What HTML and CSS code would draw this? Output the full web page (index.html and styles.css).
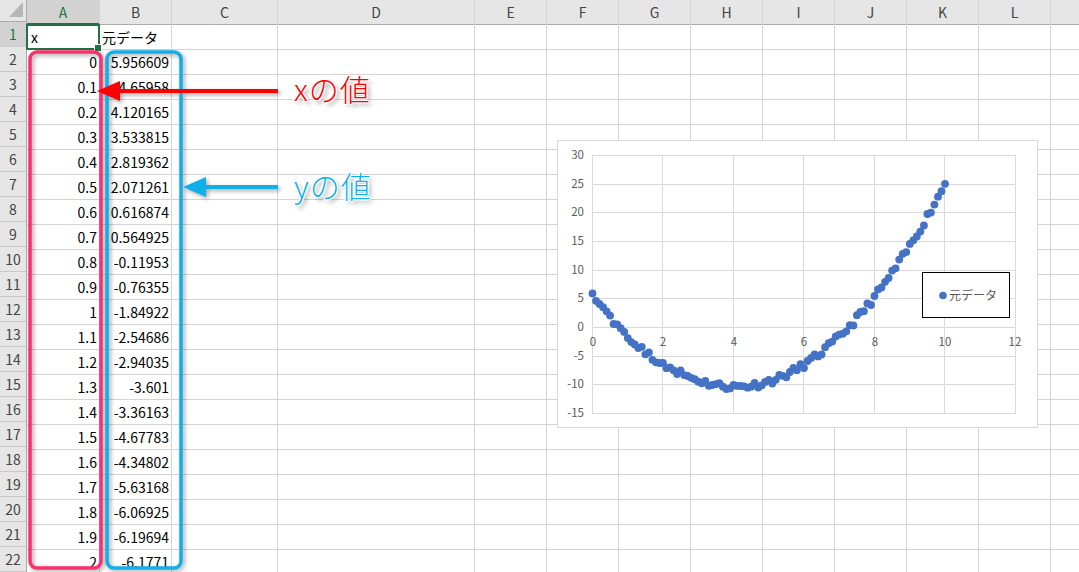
FILE: index.html
```html
<!DOCTYPE html>
<html lang="ja">

<head>
    <meta charset="UTF-8" />
    <title>元データ - Excel</title>
    <link rel="stylesheet" href="styles.css">
</head>

<body>
    <div class="sheet">
        <div class="col rowhead">
            <div class="hd corner">
                <svg width="14" height="15" viewBox="0 0 14 15"><polygon points="14,0 14,15 0,15" fill="#b7b7b7" /></svg>
            </div>
            <div class="cells">
                <div class="cell sel">1</div>
                <div class="cell">2</div>
                <div class="cell">3</div>
                <div class="cell">4</div>
                <div class="cell">5</div>
                <div class="cell">6</div>
                <div class="cell">7</div>
                <div class="cell">8</div>
                <div class="cell">9</div>
                <div class="cell">10</div>
                <div class="cell">11</div>
                <div class="cell">12</div>
                <div class="cell">13</div>
                <div class="cell">14</div>
                <div class="cell">15</div>
                <div class="cell">16</div>
                <div class="cell">17</div>
                <div class="cell">18</div>
                <div class="cell">19</div>
                <div class="cell">20</div>
                <div class="cell">21</div>
                <div class="cell">22</div>
            </div>
        </div>

        <div class="col col-a">
            <div class="hd sel">A</div>
            <div class="cells">
                <div class="cell text active">x</div>
                <div class="cell">0</div>
                <div class="cell">0.1</div>
                <div class="cell">0.2</div>
                <div class="cell">0.3</div>
                <div class="cell">0.4</div>
                <div class="cell">0.5</div>
                <div class="cell">0.6</div>
                <div class="cell">0.7</div>
                <div class="cell">0.8</div>
                <div class="cell">0.9</div>
                <div class="cell">1</div>
                <div class="cell">1.1</div>
                <div class="cell">1.2</div>
                <div class="cell">1.3</div>
                <div class="cell">1.4</div>
                <div class="cell">1.5</div>
                <div class="cell">1.6</div>
                <div class="cell">1.7</div>
                <div class="cell">1.8</div>
                <div class="cell">1.9</div>
                <div class="cell">2</div>
            </div>
        </div>

        <div class="col col-b">
            <div class="hd">B</div>
            <div class="cells">
                <div class="cell text">元データ</div>
                <div class="cell">5.956609</div>
                <div class="cell">4.65958</div>
                <div class="cell">4.120165</div>
                <div class="cell">3.533815</div>
                <div class="cell">2.819362</div>
                <div class="cell">2.071261</div>
                <div class="cell">0.616874</div>
                <div class="cell">0.564925</div>
                <div class="cell">-0.11953</div>
                <div class="cell">-0.76355</div>
                <div class="cell">-1.84922</div>
                <div class="cell">-2.54686</div>
                <div class="cell">-2.94035</div>
                <div class="cell">-3.601</div>
                <div class="cell">-3.36163</div>
                <div class="cell">-4.67783</div>
                <div class="cell">-4.34802</div>
                <div class="cell">-5.63168</div>
                <div class="cell">-6.06925</div>
                <div class="cell">-6.19694</div>
                <div class="cell">-6.1771</div>
            </div>
        </div>

        <div class="col col-c"><div class="hd">C</div><div class="cells"></div></div>
        <div class="col col-d"><div class="hd">D</div><div class="cells"></div></div>
        <div class="col"><div class="hd">E</div><div class="cells"></div></div>
        <div class="col"><div class="hd">F</div><div class="cells"></div></div>
        <div class="col"><div class="hd">G</div><div class="cells"></div></div>
        <div class="col"><div class="hd">H</div><div class="cells"></div></div>
        <div class="col"><div class="hd">I</div><div class="cells"></div></div>
        <div class="col"><div class="hd">J</div><div class="cells"></div></div>
        <div class="col"><div class="hd">K</div><div class="cells"></div></div>
        <div class="col"><div class="hd">L</div><div class="cells"></div></div>
        <div class="col col-m"><div class="hd"></div><div class="cells"></div></div>

        <!-- annotation frames and arrows drawn over the cells -->
        <svg class="marks" width="1079" height="572" viewBox="0 0 1079 572">
            <g class="shadowed">
                <rect x="30" y="52" width="71" height="516" rx="7" fill="none" stroke="#fb3070" stroke-width="3.5" />
                <rect x="107" y="52" width="74" height="516" rx="7" fill="none" stroke="#12aee8" stroke-width="3.5" />
                <rect x="118" y="89" width="160" height="4" fill="#ff0000" />
                <polygon points="97,91 120,81 120,101" fill="#ff0000" />
                <rect x="203" y="185" width="75" height="4" fill="#0fb0ea" />
                <polygon points="183,187 206,177 206,197" fill="#0fb0ea" />
            </g>
        </svg>
        <div class="note note-x">xの値</div>
        <div class="note note-y">yの値</div>

        <div class="chart">
            <svg width="481" height="288" viewBox="0 0 481 288">
                <g stroke="#d9d9d9" stroke-width="1">
                    <line x1="35" y1="15.5" x2="458" y2="15.5" />
                    <line x1="35" y1="44.5" x2="458" y2="44.5" />
                    <line x1="35" y1="72.5" x2="458" y2="72.5" />
                    <line x1="35" y1="101.5" x2="458" y2="101.5" />
                    <line x1="35" y1="130.5" x2="458" y2="130.5" />
                    <line x1="35" y1="158.5" x2="458" y2="158.5" />
                    <line x1="35" y1="187.5" x2="458" y2="187.5" />
                    <line x1="35" y1="216.5" x2="458" y2="216.5" />
                    <line x1="35" y1="244.5" x2="458" y2="244.5" />
                    <line x1="35" y1="273.5" x2="458" y2="273.5" />
                    <line x1="35.5" y1="15" x2="35.5" y2="274" />
                    <line x1="105.5" y1="15" x2="105.5" y2="274" />
                    <line x1="176.5" y1="15" x2="176.5" y2="274" />
                    <line x1="246.5" y1="15" x2="246.5" y2="274" />
                    <line x1="317.5" y1="15" x2="317.5" y2="274" />
                    <line x1="387.5" y1="15" x2="387.5" y2="274" />
                    <line x1="458.5" y1="15" x2="458.5" y2="274" />
                </g>
                <g class="ticks ticks-y">
                    <text x="27" y="19">30</text>
                    <text x="27" y="48">25</text>
                    <text x="27" y="76">20</text>
                    <text x="27" y="105">15</text>
                    <text x="27" y="134">10</text>
                    <text x="27" y="162">5</text>
                    <text x="27" y="191">0</text>
                    <text x="27" y="220">-5</text>
                    <text x="27" y="248">-10</text>
                    <text x="27" y="277">-15</text>
                </g>
                <g class="ticks ticks-x">
                    <text x="36" y="206">0</text>
                    <text x="106" y="206">2</text>
                    <text x="177" y="206">4</text>
                    <text x="247" y="206">6</text>
                    <text x="318" y="206">8</text>
                    <text x="388" y="206">10</text>
                    <text x="458" y="206">12</text>
                </g>
                <g id="points" fill="#4472c4"></g>
                <rect x="365.5" y="132.5" width="87" height="45" fill="#fff" stroke="#000" stroke-width="1" />
                <circle cx="386" cy="155.5" r="3.8" fill="#4472c4" />
                <text class="legend" x="392" y="160">元データ</text>
            </svg>
        </div>
    </div>

    <script>
        // Scatter points: x = 0..10 step 0.1
        const first = [5.956609, 4.65958, 4.120165, 3.533815, 2.819362, 2.071261, 0.616874, 0.564925, -0.11953,
            -0.76355, -1.84922, -2.54686, -2.94035, -3.601, -3.36163, -4.67783, -4.34802, -5.63168, -6.06925,
            -6.19694, -6.1771];
        let seed = 11;
        function rand() {
            seed = (seed * 16807) % 2147483647;
            return seed / 2147483647;
        }
        const points = document.getElementById("points");
        for (let i = 0; i <= 100; i++) {
            const x = i / 10;
            const y = i < first.length ? first[i] : (x - 4.05) ** 2 - 10.3 + (rand() - 0.5) * 1.2;
            const c = document.createElementNS("http://www.w3.org/2000/svg", "circle");
            c.setAttribute("cx", (35.5 + x * 35.25).toFixed(1));
            c.setAttribute("cy", (187.5 - y * 5.733).toFixed(1));
            c.setAttribute("r", 3.9);
            points.appendChild(c);
        }
    </script>
</body>

</html>
```

FILE: styles.css
```css
* {
    margin: 0;
    padding: 0;
    box-sizing: border-box;
}

html,
body {
    width: 100%;
    height: 100%;
    overflow: hidden;
    background: #fff;
    color: #000;
    font-family: "Noto Sans CJK JP", "Noto Sans", sans-serif;
    font-size: 14px;
}

.sheet {
    position: relative;
    display: flex;
    height: 572px;
}

.col {
    display: flex;
    flex-direction: column;
    flex: none;
    width: 72px;
    border-right: 1px solid #d4d4d4;
}

.rowhead {
    width: 27px;
    border-right: 1px solid #ababab;
    background: #e6e6e6;
}

.col-a {
    width: 73px;
}

.col-c {
    width: 106px;
}

.col-d {
    width: 197px;
}

.col-m {
    flex: 1;
    border-right: none;
}

.hd {
    height: 25px;
    line-height: 24px;
    text-align: center;
    background: #e6e6e6;
    border-bottom: 1px solid #ababab;
    color: #444;
    font-size: 14px;
}

.hd.sel {
    background: #d2d2d2;
    color: #217346;
    border-bottom: 2px solid #217346;
}

.corner {
    display: flex;
    align-items: flex-end;
    justify-content: flex-end;
    padding: 0 3px 4px 0;
}

.cells {
    flex: 1;
    background: repeating-linear-gradient(to bottom, #fff 0 24px, #d4d4d4 24px 25px);
}

.rowhead .cells {
    background: repeating-linear-gradient(to bottom, #e6e6e6 0 24px, #c8c8c8 24px 25px);
}

.cell {
    height: 25px;
    line-height: 24px;
    padding: 0 2px;
    text-align: right;
    white-space: nowrap;
}

.cell.text {
    text-align: left;
}

.rowhead .cell {
    text-align: center;
    color: #444;
}

.rowhead .cell.sel {
    background: #d2d2d2;
    color: #217346;
    border-bottom: 1px solid #c8c8c8;
}

.cell.active {
    position: relative;
    margin-left: -1px;
    margin-top: -1px;
    height: 26px;
    width: 74px;
    padding-left: 3px;
    border: 2px solid #217346;
    background: #fff;
    line-height: 22px;
}

.cell.active::after {
    content: "";
    position: absolute;
    right: -4px;
    bottom: -4px;
    width: 6px;
    height: 6px;
    background: #217346;
    border: 1px solid #fff;
}

.marks {
    position: absolute;
    left: 0;
    top: 0;
    pointer-events: none;
}

.shadowed {
    filter: drop-shadow(2px 2px 2px rgba(0, 0, 0, 0.35));
}

.note {
    position: absolute;
    left: 294px;
    font-size: 30px;
    line-height: 36px;
    font-weight: 300;
    letter-spacing: 1px;
    text-shadow: -1px -1px 0 #fff, 1px -1px 0 #fff, -1px 1px 0 #fff, 1px 1px 0 #fff,
        3px 3px 4px rgba(0, 0, 0, 0.45);
}

.note-x {
    top: 70px;
    color: #ff0000;
}

.note-y {
    top: 167px;
    color: #0fb0ea;
}

.chart {
    position: absolute;
    left: 557px;
    top: 140px;
    width: 481px;
    height: 288px;
    background: #fff;
    border: 1px solid #d9d9d9;
}

.chart svg {
    display: block;
    margin: -1px 0 0 -1px;
}

.ticks {
    font-size: 11.5px;
    fill: #595959;
}

.ticks-y {
    text-anchor: end;
}

.ticks-x {
    text-anchor: middle;
}

.legend {
    font-size: 12px;
    fill: #595959;
}
```
